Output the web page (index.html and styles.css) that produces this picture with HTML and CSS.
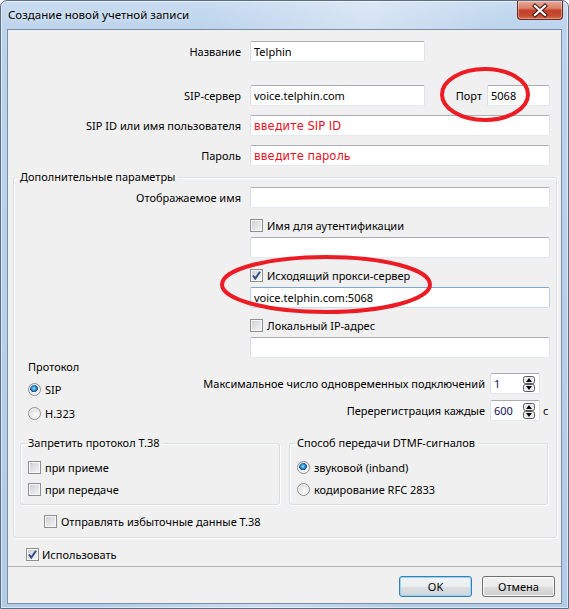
FILE: index.html
```html
<!DOCTYPE html>
<html lang="ru">
<head>
    <meta charset="UTF-8">
    <title>Создание новой учетной записи</title>
    <link rel="stylesheet" href="styles.css">
</head>
<body>
    <div class="window">
        <div class="titlebar">
            <span class="title">Создание новой учетной записи</span>
            <span class="close">
                <svg width="44" height="17" viewBox="0 0 44 17">
                    <path d="M17 4 L27 13 M27 4 L17 13" stroke="#3a1a14" stroke-width="4.2" stroke-linecap="square"/>
                    <path d="M17 4 L27 13 M27 4 L17 13" stroke="#fff" stroke-width="2.2" stroke-linecap="square"/>
                </svg>
            </span>
        </div>

        <div class="client">
            <div class="row">
                <span class="lbl">Название</span>
                <input class="field short" value="Telphin">
            </div>
            <div class="row server">
                <span class="lbl">SIP-сервер</span>
                <input class="field short" value="voice.telphin.com">
                <span class="port-lbl">Порт</span>
                <input class="field port" value="5068">
            </div>
            <div class="row">
                <span class="lbl">SIP ID или имя пользователя</span>
                <input class="field long hint" value="введите SIP ID">
            </div>
            <div class="row">
                <span class="lbl">Пароль</span>
                <input class="field long hint" value="введите пароль">
            </div>

            <fieldset class="group extra">
                <legend>Дополнительные параметры</legend>
                <div class="row inner">
                    <span class="lbl">Отображаемое имя</span>
                    <input class="field long">
                </div>

                <div class="check-row sub"><span class="cb"></span>Имя для аутентификации</div>
                <input class="field long sub under">

                <div class="check-row sub">
                    <span class="cb"><svg width="11" height="11" viewBox="0 0 11 11"><path d="M2 5.5 L4.3 8.5 L9 1.8" fill="none" stroke="#2f4f86" stroke-width="2"/></svg></span>Исходящий прокси-сервер
                </div>
                <input class="field long sub under hover" value="voice.telphin.com:5068">

                <div class="check-row sub"><span class="cb"></span>Локальный IP-адрес</div>
                <input class="field long sub under">

                <div class="proto">
                    <div class="proto-left">
                        <div class="caption">Протокол</div>
                        <div class="check-row sip"><span class="rb on"></span>SIP</div>
                        <div class="check-row h323"><span class="rb"></span>H.323</div>
                    </div>
                    <div class="limits">
                        <span class="lbl">Максимальное число одновременных подключений</span>
                        <div class="spin">
                            <span>1</span>
                            <svg width="12" height="16" viewBox="0 0 12 16">
                                <rect x="0.5" y="0.5" width="11" height="7" rx="2" fill="#ececec" stroke="#5a5a5a"/>
                                <rect x="0.5" y="8.5" width="11" height="7" rx="2" fill="#ececec" stroke="#5a5a5a"/>
                                <path d="M6 2 L9 6 L3 6 Z" fill="#000"/>
                                <path d="M3 10 L9 10 L6 14 Z" fill="#000"/>
                            </svg>
                        </div>
                        <span></span>
                        <span class="lbl">Перерегистрация каждые</span>
                        <div class="spin">
                            <span>600</span>
                            <svg width="12" height="16" viewBox="0 0 12 16">
                                <rect x="0.5" y="0.5" width="11" height="7" rx="2" fill="#ececec" stroke="#5a5a5a"/>
                                <rect x="0.5" y="8.5" width="11" height="7" rx="2" fill="#ececec" stroke="#5a5a5a"/>
                                <path d="M6 2 L9 6 L3 6 Z" fill="#000"/>
                                <path d="M3 10 L9 10 L6 14 Z" fill="#000"/>
                            </svg>
                        </div>
                        <span class="unit">с</span>
                    </div>
                </div>

                <div class="groups">
                    <fieldset class="group small t38">
                        <legend>Запретить протокол Т.38</legend>
                        <div class="check-row"><span class="cb"></span>при приеме</div>
                        <div class="check-row second"><span class="cb"></span>при передаче</div>
                    </fieldset>
                    <fieldset class="group small dtmf">
                        <legend>Способ передачи DTMF-сигналов</legend>
                        <div class="check-row"><span class="rb on"></span>звуковой (inband)</div>
                        <div class="check-row second"><span class="rb"></span>кодирование RFC 2833</div>
                    </fieldset>
                </div>

                <div class="check-row redundant"><span class="cb"></span>Отправлять избыточные данные Т.38</div>
            </fieldset>

            <div class="check-row use">
                <span class="cb"><svg width="11" height="11" viewBox="0 0 11 11"><path d="M2 5.5 L4.3 8.5 L9 1.8" fill="none" stroke="#2f4f86" stroke-width="2"/></svg></span>Использовать
            </div>

            <div class="separator"></div>

            <div class="buttons">
                <button class="btn default">OK</button>
                <button class="btn">Отмена</button>
            </div>
        </div>

        <!-- hand-drawn marks over the dialog -->
        <svg class="marks" width="569" height="609" viewBox="0 0 569 609">
            <ellipse cx="485" cy="94.5" rx="43" ry="25.5" fill="none" stroke="#ed1c24" stroke-width="4"/>
            <ellipse cx="326" cy="284.5" rx="104" ry="27.5" fill="none" stroke="#ed1c24" stroke-width="4"/>
        </svg>
    </div>
</body>
</html>
```

FILE: styles.css
```css
html, body {
    margin: 0;
    padding: 0;
    background: #fff;
}

body {
    font-family: "Noto Sans", "Open Sans", sans-serif;
    font-size: 11px;
    color: #000;
}

/* Window frame */
.window {
    position: relative;
    width: 569px;
    height: 609px;
    box-sizing: border-box;
    padding: 0 6px 4px;
    border: 1px solid #5a6e86;
    border-radius: 7px 7px 0 0;
    background:
        linear-gradient(100deg, rgba(255,255,255,0) 30%, rgba(255,255,255,0.35) 55%, rgba(255,255,255,0) 75%),
        linear-gradient(to bottom, #c9dcf1 0, #bcd3ec 28px, #b2cbe6 100%);
    box-shadow: inset 0 0 0 1px rgba(255,255,255,0.55);
    display: flex;
    flex-direction: column;
}

.titlebar {
    height: 28px;
    margin: 0 -6px;
    padding: 0 5px 0 7px;
    display: flex;
    align-items: flex-start;
}

.title {
    line-height: 28px;
    font-size: 11.5px;
    color: #000;
    text-shadow: 0 0 6px rgba(255,255,255,0.9);
}

.close {
    margin-left: auto;
    width: 46px;
    height: 19px;
    box-sizing: border-box;
    border: 1px solid #6b2a1f;
    border-top: none;
    border-radius: 0 0 4px 4px;
    background: linear-gradient(to bottom, #e8a898 0%, #d98169 40%, #c6412a 52%, #c54a30 80%, #d66a4c 100%);
    box-shadow: inset 0 0 0 1px rgba(255,255,255,0.35);
    display: flex;
    align-items: center;
    justify-content: center;
}

.client {
    height: 575px;
    box-sizing: border-box;
    border: 1px solid #7b8ea4;
    background: #f0f0f0;
    padding-top: 11px;
}

/* Form rows */
.row {
    display: flex;
    align-items: center;
    height: 21px;
}
.row + .row {
    margin-top: 9px;
}
.row.server {
    margin-top: 23px;
}

.lbl {
    width: 233px;
    margin-right: 9px;
    text-align: right;
    white-space: nowrap;
}
.row.inner .lbl {
    width: 227px;
}

.field {
    height: 21px;
    box-sizing: border-box;
    margin: 0;
    padding: 0 3px;
    border: 1px solid;
    border-color: #abadb3 #e2e3ea #e3e9ef #dbdfe6;
    border-radius: 2px;
    background: #fff;
    font-family: "Noto Sans", sans-serif;
    font-size: 11px;
    color: #000;
    outline: none;
}
.field.short { width: 175px; }
.field.long { width: 300px; }
.field.port { width: 63px; }
.field.hover {
    border-color: #7ea6cf #b9d3ea #c6dff0 #b9d3ea;
}
.field.hint {
    font-family: "DejaVu Sans", sans-serif;
    font-size: 11.5px;
    color: #e81123;
}

.port-lbl {
    width: 57px;
    margin-right: 5px;
    text-align: right;
}

/* Group boxes */
.group {
    margin: 0;
    padding: 0;
    min-width: 0;
    box-sizing: border-box;
    border: 1px solid #d5dfe5;
    border-radius: 3px;
    box-shadow: inset 1px 1px 0 #fff, 1px 1px 0 #fff;
}
.group legend {
    margin-left: 4px;
    padding: 0 2px;
    line-height: 16px;
}

.group.extra {
    margin: 3px 4px 0 5px;
    padding: 2px 0 8px;
}

/* Checkboxes and radios */
.check-row {
    display: flex;
    align-items: center;
    gap: 4px;
    height: 16px;
    margin-top: 9px;
    white-space: nowrap;
}
.check-row.sub,
.field.sub {
    margin-left: 236px;
}
.field.under {
    display: block;
    margin-top: 4px;
}

.cb {
    width: 13px;
    height: 13px;
    box-sizing: border-box;
    flex: none;
    border: 1px solid #8f8f8f;
    background: linear-gradient(135deg, #c9cbcf 0%, #e6e7e8 60%, #f4f4f4 100%);
    box-shadow: inset 0 0 0 1px #f7f7f7;
    display: flex;
    align-items: center;
    justify-content: center;
}
.cb svg {
    display: block;
}

.rb {
    width: 13px;
    height: 13px;
    box-sizing: border-box;
    flex: none;
    border: 1px solid #8e8f8f;
    border-radius: 50%;
    background: radial-gradient(circle at 60% 65%, #fdfdfd 0%, #e4e4e4 55%, #cfcfcf 100%);
    box-shadow: inset 0 0 0 1px #f6f6f6;
}
.rb.on {
    background:
        radial-gradient(circle at 45% 40%, #b9ecff 0, #3aa3e4 1.6px, #1d6cb0 3px, #17467a 3.6px, transparent 4.1px),
        radial-gradient(circle at 60% 65%, #fdfdfd 0%, #e4e4e4 55%, #cfcfcf 100%);
}

/* Protocol and limits */
.proto {
    display: flex;
    margin-top: 1px;
}
.proto-left {
    flex: 1;
    padding-left: 14px;
}
.caption {
    line-height: 16px;
}
.check-row.sip { margin-top: 6px; }
.check-row.h323 { margin-top: 8px; }

.limits {
    margin: 14px 2px 0 0;
    display: grid;
    grid-template-columns: auto 50px 12px;
    column-gap: 2px;
    row-gap: 6px;
    align-items: center;
}
.limits .lbl {
    width: auto;
    margin-right: 0;
    padding-right: 3px;
}
.spin {
    height: 21px;
    box-sizing: border-box;
    border: 1px solid;
    border-color: #abadb3 #e2e3ea #e3e9ef #dbdfe6;
    border-radius: 2px;
    background: #fff;
    padding: 0 4px 0 3px;
    display: flex;
    align-items: center;
    justify-content: space-between;
    color: #14145a;
}
.spin svg {
    display: block;
}
.unit {
    padding-left: 1px;
}

/* Small groups */
.groups {
    display: flex;
    gap: 9px;
    margin: 14px 0 0 6px;
}
.group.small {
    flex: none;
    padding: 8px 7px 7px;
}
.group.small legend {
    margin-left: -2px;
}
.group.t38 { width: 260px; }
.group.dtmf { width: 259px; }
.group.small .check-row:first-of-type { margin-top: 0; }
.group.small .check-row.second { margin-top: 6px; }

.check-row.redundant {
    margin: 8px 0 0 30px;
}

.check-row.use {
    margin: 8px 0 0 18px;
    gap: 3px;
}

.separator {
    height: 1px;
    margin-top: 4px;
    background: #b0b0b0;
}

/* Buttons */
.buttons {
    display: flex;
    justify-content: flex-end;
    gap: 10px;
    margin-top: 9px;
    padding-right: 6px;
}
.btn {
    width: 73px;
    height: 21px;
    margin: 0;
    padding: 0;
    border: 1px solid #707070;
    border-radius: 3px;
    background: linear-gradient(to bottom, #f2f2f2 0%, #ebebeb 50%, #dddddd 51%, #cfcfcf 100%);
    box-shadow: inset 0 0 0 1px #fbfbfb;
    font-family: "Noto Sans", sans-serif;
    font-size: 11px;
    color: #000;
}
.btn.default {
    border-color: #3c7fb1;
    box-shadow: inset 0 0 0 1px #8fd6f5;
    background: linear-gradient(to bottom, #f2f4f6 0%, #eaedef 50%, #dde0e3 51%, #d0d4d8 100%);
}

/* Red marks drawn over the screenshot */
.marks {
    position: absolute;
    top: -1px;
    left: -1px;
    pointer-events: none;
}
```
